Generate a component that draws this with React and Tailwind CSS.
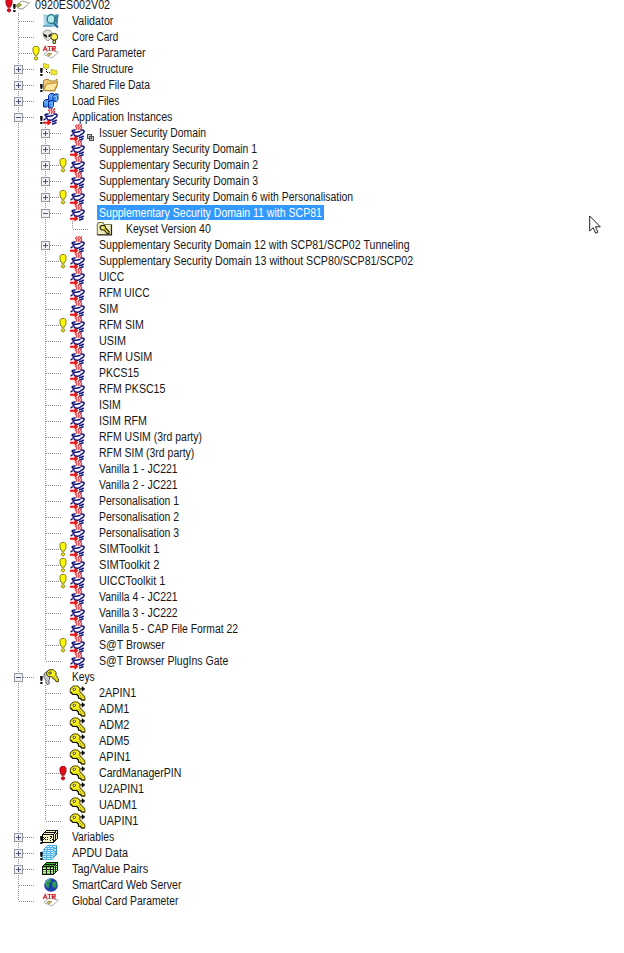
import React, { useLayoutEffect, useRef, useState } from "react";

const COLORS = {
  k: "#111111",
  y: "#f2ea10",
  c: "#5ab4e8",
  d: "#3f8fcb",
  e: "#c8ecfa",
  n: "#3fb02a",
  p: "#f8f3c4",
  q: "#c4f79a",
  h: "#6fc34e",
};

const VARIABLES = [
  "................",
  "....kkkkkkkkkkkk",
  "...kpppppppppkpk",
  "..kkkkkkkkkkkkpk",
  ".kppppppppppkpkk",
  "kkkkkkkkkkkkpkpk",
  "kppppppppppkpkpk",
  "kpppppppkkpkpkpk",
  "kkpkpkpppkpkpkpk",
  "kpkpppppkppkpkpk",
  "kkpkpkppppkkpkk.",
  "kpppppppkppkkk..",
  "kppppppppppkk...",
  "kkkkkkkkkkkk....",
  "................",
  "................",
];

const APDU = [
  ".....cccccccccc.",
  "....ceeceeceeed.",
  "...cccccccccced.",
  "..ceeceeceeccdd.",
  ".ccccccccccceed.",
  ".eceeceeceecced.",
  "cccccccccccecdd.",
  "ceeeceeeceececd.",
  "cccccccccccecdd.",
  "ceeeceeeceececd.",
  "cccccccccccecd..",
  "ceeeceeeceecd...",
  "cccccccccccd....",
  "ceeeceeecee.....",
  "ccccccccccc.....",
  "................",
];

const TAGS = [
  "................",
  "....kkkkkkkkkkkk",
  "...knnnnnnnnnknk",
  "..kkkkkkkkkkkkqk",
  ".knnnnnnnnnnknkk",
  "kkkkkkkkkkkkqkqk",
  "khhhkhhhkhhknknk",
  "kqqqkqqqkqqkqkqk",
  "kkkkkkkkkkkknknk",
  "kqqqkqqqkqqkqkqk",
  "khhhkhhhkhhknkk.",
  "kqqqkqqqkqqkqk..",
  "khhhkhhhkhhkk...",
  "kkkkkkkkkkkk....",
  "................",
  "................",
];

function Pixels({ grid }) {
  return (
    <svg className="h-4 w-4 shrink-0" viewBox="0 0 16 16" shapeRendering="crispEdges">
      {grid.map((line, y) =>
        line.split("").map((ch, x) =>
          COLORS[ch] ? <rect key={x + "-" + y} x={x} y={y} width="1" height="1" fill={COLORS[ch]} /> : null
        )
      )}
    </svg>
  );
}

function Svg({ children }) {
  return (
    <svg className="h-4 w-4 shrink-0 overflow-visible" viewBox="0 0 16 16" fill="none">
      {children}
    </svg>
  );
}

function JavaIcon() {
  return (
    <Svg>
      <path
        d="M8 -.5l-1.500 1.700L8 3 6.800 4.800M10.500 -.8L8.900 1.100l1.500 1.800-1.300 2M12.900 -.5l-1.500 1.600 1.300 1.700-1.300 1.800"
        stroke="#e8262c"
        strokeWidth="1.100"
      />
      <path d="M3 6h10L10 13H6z" fill="#fff" />
      <g stroke="#12127c" strokeWidth="1.500">
        <path d="M6.500 5C3.500 4.700 2 6.300 4 7c2 .5 4.500.3 7.500-.8" />
        <path d="M3.800 7.500l2 3.200c2 .8 3.700.6 5.200-.2" />
        <path d="M11.500 5.200c3.300-.7 4.600 1 3 2.600-.8.900-2 1.300-3.500 2.700" />
        <path d="M10 12.700c1.800 0 3-.6 4.800-1.700M10 15c1.600.1 3-.5 4.500-1.600" />
        <path d="M3.800 9.700c-1.700.3-2 1-1.300 1.600" />
      </g>
      <path d="M1 12.700h4.500v-2.400l4 3.300-4 3.100v-2H1z" fill="#f01014" />
    </Svg>
  );
}

function KeyIcon() {
  return (
    <Svg>
      <path
        d="M4.500 1h4l2.300 2.200v3.300l5 5.500v3h-3.300l-1-1.700h-2v-2L7.500 9.300 4 9.500 1.300 7.300V3.700z"
        fill="#faf318"
        stroke="#55520c"
        strokeWidth="1.100"
      />
      <path d="M1.500 7l2.500 2.500 3.500-.2 2 2v2h2l1 1.700h3" stroke="#16160a" strokeWidth="1.100" />
      <path d="M4 3.700l1.800-.7 1 1-.8 1.500-1.600.3z" fill="#fff" stroke="#3a380a" strokeWidth=".8" />
      <path d="M8.800 7.500l5 5.500" stroke="#aaa312" strokeWidth=".9" />
      <path d="M11.300 3.200h1.500V1l3.500 2.900-3.500 2.900V4.600h-1.500z" fill="#0c0c0c" />
    </Svg>
  );
}

function KeysIcon() {
  return (
    <Svg>
      <path
        d="M5.500 2L2 5v3.500L4 11v3.500l2 1.300L7.500 14 6.500 12l1-1.500V6z"
        fill="#c9cbd1"
        stroke="#5c5e68"
        strokeWidth="1"
      />
      <path
        d="M7 .8h4.500l2.500 2.500v3.200l2.300 3.300v3l-2.500-.3-1-2-1.500-.5-.8-2L7 7.500 4.700 6V3z"
        fill="#faf21c"
        stroke="#3c3a0c"
        strokeWidth="1"
      />
      <path d="M7 3h2v2H7z" fill="#fff" stroke="#22220a" strokeWidth=".8" />
      <path d="M11.500 7l3.300 4.500" stroke="#9d9712" strokeWidth=".8" />
    </Svg>
  );
}

function KeysetIcon() {
  return (
    <Svg>
      <path d="M1.300 3.500l1-2h4.500l1.200 2h7.400v10H1.300z" fill="#f0eebc" stroke="#77775a" strokeWidth="1.100" />
      <path d="M15.500 4v10H1.500" stroke="#26261a" strokeWidth="1.200" />
      <path
        d="M5.500 4.500h3l1 1.500v1l3.500 3.500v2h-2L8 9H5.500L4.200 7.500v-2z"
        fill="#dcd520"
        stroke="#1c1c0a"
        strokeWidth="1.100"
      />
      <path d="M6 6h1.300v1.200H6z" fill="#fff" />
    </Svg>
  );
}

function FilesIcon() {
  return (
    <Svg>
      <path d="M1.500 2.500h2l.5.800h2.500v3.900h-5z" fill="#f1ea2a" stroke="#bdb32c" strokeWidth=".8" />
      <path d="M9 8.500h2.200l.5.800h3v4.400H9z" fill="#f1ea2a" stroke="#bdb32c" strokeWidth=".8" />
      <path d="M4.500 8v4M5 11.500h4" stroke="#222" strokeDasharray="1 1" />
    </Svg>
  );
}

function CardIcon() {
  return (
    <Svg>
      <path d="M1 8.500L7 4l7.500 2L9 11 4 12z" fill="#fdfdfb" stroke="#a0a09a" />
      <path d="M2 10.500l5 1.800 2-.8" stroke="#bbb" />
      <path d="M1.500 8.700l2.500-2 2.300 1-2.500 2.200z" fill="#c6cc2c" stroke="#6a7a15" strokeWidth=".9" />
    </Svg>
  );
}

function AtrIcon() {
  return (
    <Svg>
      <path d="M2 9.500L7 5l9.500 2-6.500 6z" fill="#fff" stroke="#b3aba6" />
      <path d="M5 9.500l2-1.500 2.500.8-2.200 1.900z" fill="#e0cf5b" stroke="#7d7222" strokeWidth=".8" />
      <path
        d="M1.200 6L3.200 1.500 5.200 6M2.200 4.500h2M5.300 1.500h4.400M7.500 1.500V6M10.500 6V1.600h2.700v2h-2.700L13.500 6"
        stroke="#c8363a"
        strokeWidth="1.200"
      />
    </Svg>
  );
}

function ValidatorIcon() {
  return (
    <Svg>
      <path d="M1.500 1l3 1h6l6-1-1 12-5 1H1l1-5z" fill="#8fc3dd" />
      <path d="M1.500 1.500l3 2V11l-2.500 2z" fill="#b4d8ea" />
      <path d="M13 2l3.500-.5-1 10-2.500-2z" fill="#3f84a8" />
      <ellipse cx="9" cy="6" rx="3.800" ry="4.500" fill="#b8ebec" stroke="#2b7b86" strokeWidth="1.300" />
      <path d="M11.500 10l4.500 4.500" stroke="#176a94" strokeWidth="2" />
      <path d="M1 13h9" stroke="#68aaca" strokeWidth="1.500" />
    </Svg>
  );
}

function CoreIcon() {
  return (
    <Svg>
      <path d="M1 4.500C1.500 0 9 0 10 4c0 3-2 7-4 8-2-1-5-4-5-7.500z" fill="#e2e0d8" stroke="#8f8d86" strokeWidth=".9" />
      <path d="M1.300 4.500l3.500 1.800.4 2.400C3.300 8.500 1.700 7.200 1.300 4.500zM9.300 4.500L6.500 6v2.300C8 7.700 9.200 6.500 9.300 4.500z" fill="#111" />
      <circle cx="12.300" cy="7.800" r="3.400" fill="#fff65c" stroke="#222" strokeWidth=".9" />
      <path d="M11 11.300h2.600v3H11z" fill="#f4e650" stroke="#222" strokeWidth=".9" />
    </Svg>
  );
}

function FolderIcon() {
  return (
    <Svg>
      <path d="M1.500 13.500V3.500l2-1h3l1 1.500h5L15 2v7l-2.500 5z" fill="#f1cd74" stroke="#a37a28" />
      <path d="M1.500 13.500L4.500 7l11.500-1.500-3.500 8z" fill="#fae6a0" stroke="#b98928" />
    </Svg>
  );
}

function LoadIcon() {
  return (
    <Svg>
      {[
        [6, 0],
        [10.5, 0.5],
        [1, 6],
        [6, 7],
      ].map(([x, y]) => (
        <g key={x + "-" + y} transform={`translate(${x} ${y})`}>
          <path d="M.5 2.500L2.500.500h3v5L4 8H.5z" fill="#3f8cf4" stroke="#0c2a94" />
          <path d="M1 3h2.500M4 3l1.500-1.500M4 3v4.500" stroke="#8ad4fc" strokeWidth=".8" />
        </g>
      ))}
    </Svg>
  );
}

function GlobeIcon() {
  return (
    <Svg>
      <circle cx="9" cy="8" r="6.800" fill="#1c3fae" />
      <path d="M4 4l3-2 2.500.5-1 3-2 1 1 2-1.500 3-2-2.500-1-2zM11 4.500l3 .5.8 3-1.800 3.500-2.200-1.500-.8-3z" fill="#2f9a50" />
      <path d="M3.500 6c.6-2 2-3.200 4-3.800" stroke="#6bb5ef" />
    </Svg>
  );
}

const grids = { variables: VARIABLES, apdu: APDU, tags: TAGS };
const drawings = {
  java: JavaIcon,
  key: KeyIcon,
  keys: KeysIcon,
  keyset: KeysetIcon,
  files: FilesIcon,
  card: CardIcon,
  atr: AtrIcon,
  validator: ValidatorIcon,
  core: CoreIcon,
  folder: FolderIcon,
  load: LoadIcon,
  globe: GlobeIcon,
};

function Icon({ name }) {
  if (grids[name]) return <Pixels grid={grids[name]} />;
  const Drawing = drawings[name];
  return <Drawing />;
}

function Alert({ red, root }) {
  const fill = red ? "#e00c1c" : "#fbf60a";
  const stroke = red ? "#b00616" : "#85821c";
  return (
    <svg className={`absolute top-0 h-4 w-2 ${root ? "left-[-4px]" : "left-[23px]"}`} viewBox="0 0 8 16">
      <path d="M2.300 1.500h3.400L7 3v3.500L5.300 10.200H2.700L1 6.500V3z" fill={fill} stroke={stroke} />
      <circle cx="4" cy="13.300" r="1.600" fill={fill} stroke={stroke} />
    </svg>
  );
}

function Mark({ root }) {
  return (
    <svg className={`absolute top-0 h-4 w-[3px] ${root ? "left-1" : "left-[31px]"}`} viewBox="0 0 3 16">
      <path d="M.2 7h2.400v3l-.5 2H.7l-.5-2zM.3 13h2.200v2H.3z" fill="#080808" />
    </svg>
  );
}

const V_DOTS = "bg-[repeating-linear-gradient(to_bottom,#8c8c8c_0_1px,#fff_1px_2px)]";
const H_DOTS = "bg-[repeating-linear-gradient(to_right,#8c8c8c_0_1px,#fff_1px_2px)]";

function Guide() {
  return (
    <div className="flex w-[27px] shrink-0 pl-[9px]">
      <div className={`w-px ${V_DOTS}`} />
    </div>
  );
}

function Branch({ state, last }) {
  return (
    <div className="relative flex w-[27px] shrink-0 pl-[9px]">
      <div className={`w-px ${last ? "h-2" : "h-4"} ${V_DOTS}`} />
      <div className={`mt-2 h-px w-[15px] ${H_DOTS}`} />
      {state && (
        <svg className="absolute top-1 left-[5px] h-[9px] w-[9px]" viewBox="0 0 9 9" shapeRendering="crispEdges">
          <rect x=".5" y=".5" width="8" height="8" fill="#f2f2f5" stroke="#9296a0" />
          <path d={state === "plus" ? "M2 4.500h5M4.500 2v5" : "M2 4.500h5"} stroke="#48557c" />
        </svg>
      )}
    </div>
  );
}

// depth, icon, label, label width, options
const rows = [
  [0, "card", "0920ES002V02", 75, { alert: "red", mark: true }],
  [1, "validator", "Validator", 41],
  [1, "core", "Core Card", 46],
  [1, "atr", "Card Parameter", 73, { alert: "yellow" }],
  [1, "files", "File Structure", 61, { box: "plus", mark: true }],
  [1, "folder", "Shared File Data", 78, { box: "plus", mark: true }],
  [1, "load", "Load Files", 47, { box: "plus" }],
  [1, "java", "Application Instances", 100, { box: "minus", mark: true }],
  [2, "java", "Issuer Security Domain", 107, { box: "plus", linked: true }],
  [2, "java", "Supplementary Security Domain 1", 158, { box: "plus" }],
  [2, "java", "Supplementary Security Domain 2", 159, { box: "plus", alert: "yellow" }],
  [2, "java", "Supplementary Security Domain 3", 159, { box: "plus" }],
  [2, "java", "Supplementary Security Domain 6 with Personalisation", 254, { box: "plus", alert: "yellow" }],
  [2, "java", "Supplementary Security Domain 11 with SCP81", 223, { box: "minus", selected: true }],
  [3, "keyset", "Keyset Version 40", 85, { last: true }],
  [2, "java", "Supplementary Security Domain 12 with SCP81/SCP02 Tunneling", 311, { box: "plus" }],
  [2, "java", "Supplementary Security Domain 13 without SCP80/SCP81/SCP02", 314, { alert: "yellow" }],
  [2, "java", "UICC", 25],
  [2, "java", "RFM UICC", 51],
  [2, "java", "SIM", 19],
  [2, "java", "RFM SIM", 45, { alert: "yellow" }],
  [2, "java", "USIM", 27],
  [2, "java", "RFM USIM", 53],
  [2, "java", "PKCS15", 40],
  [2, "java", "RFM PKSC15", 66],
  [2, "java", "ISIM", 22],
  [2, "java", "ISIM RFM", 48],
  [2, "java", "RFM USIM (3rd party)", 103],
  [2, "java", "RFM SIM (3rd party)", 95],
  [2, "java", "Vanilla 1 - JC221", 79],
  [2, "java", "Vanilla 2 - JC221", 79],
  [2, "java", "Personalisation 1", 80],
  [2, "java", "Personalisation 2", 80],
  [2, "java", "Personalisation 3", 80],
  [2, "java", "SIMToolkit 1", 60, { alert: "yellow" }],
  [2, "java", "SIMToolkit 2", 60, { alert: "yellow" }],
  [2, "java", "UICCToolkit 1", 66, { alert: "yellow" }],
  [2, "java", "Vanilla 4 - JC221", 79],
  [2, "java", "Vanilla 3 - JC222", 79],
  [2, "java", "Vanilla 5 - CAP File Format 22", 139],
  [2, "java", "S@T Browser", 66, { alert: "yellow" }],
  [2, "java", "S@T Browser PlugIns Gate", 129, { last: true }],
  [1, "keys", "Keys", 23, { box: "minus", mark: true }],
  [2, "key", "2APIN1", 37],
  [2, "key", "ADM1", 30],
  [2, "key", "ADM2", 30],
  [2, "key", "ADM5", 30],
  [2, "key", "APIN1", 32],
  [2, "key", "CardManagerPIN", 82, { alert: "red" }],
  [2, "key", "U2APIN1", 45],
  [2, "key", "UADM1", 38],
  [2, "key", "UAPIN1", 39, { last: true }],
  [1, "variables", "Variables", 42, { box: "plus", mark: true }],
  [1, "apdu", "APDU Data", 56, { box: "plus", mark: true }],
  [1, "tags", "Tag/Value Pairs", 76, { box: "plus" }],
  [1, "globe", "SmartCard Web Server", 109],
  [1, "atr", "Global Card Parameter", 106, { last: true }],
];

// Condenses its text horizontally to fill the given width.
function Label({ text, width, selected, root }) {
  const ref = useRef(null);
  const [scale, setScale] = useState(0.875);
  useLayoutEffect(() => {
    setScale(width / ref.current.offsetWidth);
  }, [text, width]);
  return (
    <div
      className={`px-[2px] text-[12px] ${root ? "h-[10px] leading-[10px]" : "h-[15px] leading-[16px]"} ${
        selected ? "bg-[#3399ff] text-white" : "text-[#161616]"
      }`}
    >
      <div style={{ width }}>
        <span
          ref={ref}
          className="inline-block origin-left align-top whitespace-pre"
          style={{ transform: `scaleX(${scale})` }}
        >
          {text}
        </span>
      </div>
    </div>
  );
}

function Row({ depth, icon, label, width, box, last, alert, mark, linked, selected }) {
  const root = depth === 0;
  return (
    <div className={`flex ${root ? "h-[13px]" : "h-4"}`}>
      {depth > 1 && <Guide />}
      {depth > 2 && <Guide />}
      <div className={`relative flex ${root ? "-mt-[3px]" : ""}`}>
        {!root && <Branch state={box} last={last} />}
        <div className={`flex pl-[6px] ${root ? "w-[24px]" : "w-[34px]"}`}>
          <Icon name={icon} />
        </div>
        {alert && <Alert red={alert === "red"} root={root} />}
        {mark && <Mark root={root} />}
        {linked && (
          <svg className="absolute top-[9px] left-[51px] h-[7px] w-[7px]" viewBox="0 0 7 7" shapeRendering="crispEdges">
            <path d="M.5 .5h4v4h-4zM2.500 2.500h4v4h-4z" fill="#c8cbc8" stroke="#4a504a" />
          </svg>
        )}
      </div>
      <Label text={label} width={width} selected={selected} root={root} />
    </div>
  );
}

export default function App() {
  return (
    <div className="relative h-[953px] w-[624px] overflow-hidden bg-white font-['Liberation_Sans',Arial,sans-serif]">
      <div className="flex flex-col pl-[9px]">
        {rows.map(([depth, icon, label, width, options], i) => (
          <Row key={i} depth={depth} icon={icon} label={label} width={width} {...options} />
        ))}
      </div>
      <svg className="absolute top-[215px] left-[589px] h-5 w-3" viewBox="0 0 12 20">
        <path
          d="M.7 1v15l3.500-3.300 2.400 5.500 2.300-1-2.400-5.400h4.800z"
          fill="#fff"
          stroke="#222"
          strokeWidth="1"
        />
      </svg>
    </div>
  );
}
